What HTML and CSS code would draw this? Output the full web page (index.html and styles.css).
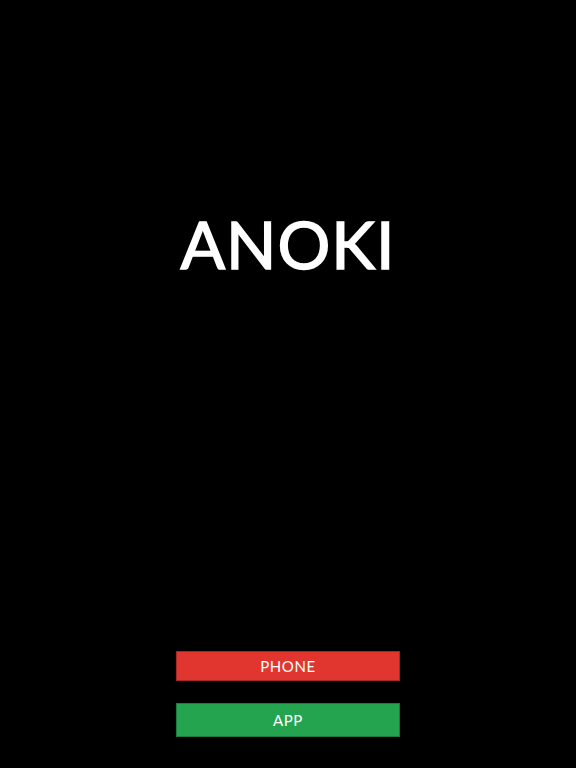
FILE: index.html
```html
<!DOCTYPE html>
<html lang="en">
<head>
    <meta charset="UTF-8">
    <meta name="viewport" content="width=device-width, initial-scale=1.0">
    <title>Anoki</title>
    <link rel="stylesheet" href="styles.css">
</head>
<body>
    <div class="screen">
        <!-- Logo -->
        <h1 class="logo">ANOKI</h1>
        <!-- Actions -->
        <div class="actions">
            <button class="btn btn-phone">PHONE</button>
            <button class="btn btn-app">APP</button>
        </div>
    </div>
</body>
</html>
```

FILE: styles.css
```css
body {
    margin: 0;
    padding: 0;
    background: #000;
    color: #fff;
    font-family: 'Lato', 'Liberation Sans', sans-serif;
}

.screen {
    height: 768px;
    display: flex;
    flex-direction: column;
    align-items: center;
}

.logo {
    margin: 206px 0 0 0;
    font-size: 66px;
    font-weight: normal;
    letter-spacing: 1px;
    line-height: 76px;
    -webkit-text-stroke: 1.5px #fff;
}

.actions {
    margin-top: auto;
    margin-bottom: 31px;
    display: flex;
    flex-direction: column;
    gap: 22px;
}

.btn {
    width: 224px;
    font-family: 'Lato', 'Liberation Sans', sans-serif;
    font-size: 15px;
    letter-spacing: 0.6px;
    color: #fff;
    border: 1px solid rgba(0, 0, 0, 0.25);
    cursor: pointer;
}

.btn-phone {
    height: 30px;
    background-color: #e13530;
}

.btn-app {
    height: 34px;
    background-color: #25a44f;
}
```
